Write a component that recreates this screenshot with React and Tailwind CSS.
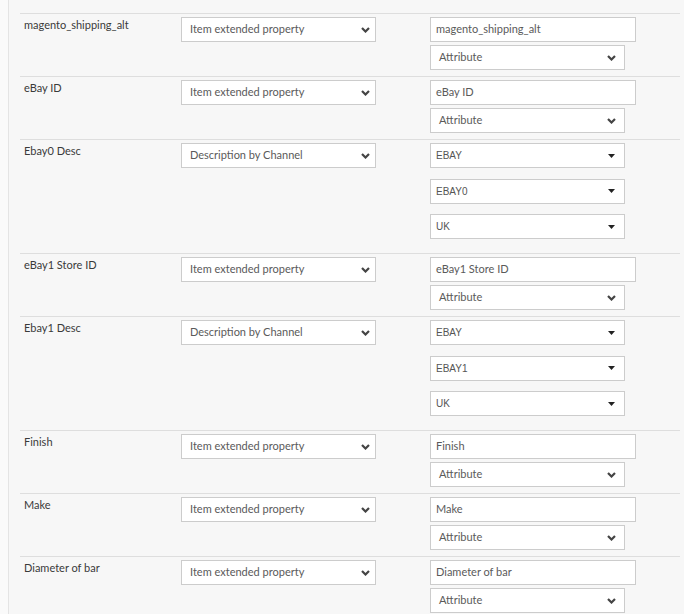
// Field mapping list: label, source type, and target controls per row
const rows = [
  { label: 'magento_shipping_alt', source: 'Item extended property', value: 'magento_shipping_alt' },
  { label: 'eBay ID', source: 'Item extended property', value: 'eBay ID' },
  { label: 'Ebay0 Desc', source: 'Description by Channel', channel: ['EBAY', 'EBAY0', 'UK'] },
  { label: 'eBay1 Store ID', source: 'Item extended property', value: 'eBay1 Store ID' },
  { label: 'Ebay1 Desc', source: 'Description by Channel', channel: ['EBAY', 'EBAY1', 'UK'] },
  { label: 'Finish', source: 'Item extended property', value: 'Finish' },
  { label: 'Make', source: 'Item extended property', value: 'Make' },
  { label: 'Diameter of bar', source: 'Item extended property', value: 'Diameter of bar' },
];

function Chevron() {
  return (
    <svg width="9" height="6" viewBox="0 0 9 6" className="shrink-0">
      <path d="M1 1l3.5 3.5L8 1" fill="none" stroke="#444" strokeWidth="2.2" />
    </svg>
  );
}

function Caret() {
  return (
    <svg width="7" height="4" viewBox="0 0 7 4" className="shrink-0">
      <path d="M0 0h7L3.5 4z" fill="#222" />
    </svg>
  );
}

// native-looking select with a chevron
function Select({ text, width, pl = 'pl-[8px]', pr = 'pr-[5px]' }) {
  return (
    <div className={`${width} h-[25px] bg-white border border-[#cccccc] flex items-center justify-between ${pl} ${pr} text-[11px] text-[#5a5a5a]`}>
      <span>{text}</span>
      <Chevron />
    </div>
  );
}

// small caret dropdown used for channel selection
function ChannelSelect({ text }) {
  return (
    <div className="w-[195px] h-[25px] bg-white border border-[#cccccc] flex items-center justify-between pl-[5px] pr-[9px] text-[10px] text-[#555] font-['Liberation_Sans',sans-serif]">
      <span>{text}</span>
      <Caret />
    </div>
  );
}

function Row({ row }) {
  return (
    <div className={`flex border-t border-[#dedede] pt-[3px] ${row.channel ? 'pb-[14px]' : 'pb-[6px]'}`}>
      <div className="w-[161px] pl-[4px] text-[11px] leading-[16px] text-[#3a3a3a]">{row.label}</div>
      <Select text={row.source} width="w-[195px]" />
      <div className="ml-[54px] flex flex-col">
        {row.channel ? (
          <div className="flex flex-col gap-[10.5px]">
            {row.channel.map((c, i) => (
              <ChannelSelect key={i} text={c} />
            ))}
          </div>
        ) : (
          <div className="flex flex-col gap-[3px]">
            <div className="w-[206px] h-[25px] bg-white border border-[#cccccc] flex items-center pl-[5px] text-[11px] text-[#5a5a5a]">
              {row.value}
            </div>
            <Select text="Attribute" width="w-[195px]" pr="pr-[8px]" />
          </div>
        )}
      </div>
    </div>
  );
}

export default function App() {
  return (
    <div className="h-[614px] overflow-hidden bg-[#f7f7f7] flex font-['Lato',sans-serif]">
      <div className="w-[9px] bg-[#fafafa] border-r border-[#e4e4e4]" />
      <div className="flex-1 pl-[11px] pr-[4px] pt-[13px]">
        {rows.map((r, i) => (
          <Row key={i} row={r} />
        ))}
      </div>
    </div>
  );
}
